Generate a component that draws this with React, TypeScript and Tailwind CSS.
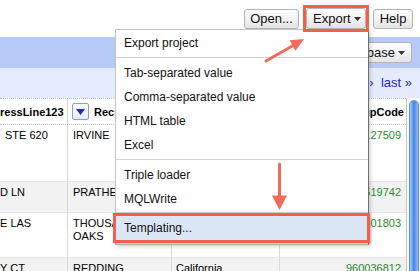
import React from "react";

function Caret({ color = "#333" }: { color?: string }) {
  return (
    <svg width="7" height="4" viewBox="0 0 7 4" className="ml-[3px] shrink-0">
      <path d="M0 0 L7 0 L3.5 4 Z" fill={color} />
    </svg>
  );
}

function Btn({ children, className = "" }: { children: React.ReactNode; className?: string }) {
  return (
    <div
      className={
        "h-[20px] flex items-center text-[13px] leading-none rounded-[3px] border border-[#b4b4b4] bg-linear-to-b from-white to-[#e4e4e4] text-[#111] whitespace-nowrap " +
        className
      }
    >
      {children}
    </div>
  );
}

function DropBox() {
  return (
    <div className="w-[17px] h-[17px] shrink-0 rounded-[2px] border border-[#8e9ccc] bg-linear-to-b from-white to-[#e6eaf6] flex items-center justify-center">
      <svg width="9" height="6" viewBox="0 0 9 6">
        <path d="M0 0 L9 0 L4.5 6 Z" fill="#2224c6" />
      </svg>
    </div>
  );
}

const rows = [
  { h: "h-[57px]", bg: "bg-white", c1: "STE 620", c1pad: "pl-[5px]", c2: "IRVINE", c3: "California", zip: "926127509" },
  { h: "h-[31px]", bg: "bg-[#f2f2f2]", c1: "D LN", c1pad: "pl-0", c2: "PRATHER", c3: "California", zip: "936519742" },
  { h: "h-[45px]", bg: "bg-white", c1: "E LAS", c1pad: "pl-0", c2: "THOUSAND OAKS", c3: "California", zip: "913601803" },
  { h: "h-[31px]", bg: "bg-[#f2f2f2]", c1: "Y CT", c1pad: "pl-0", c2: "REDDING", c3: "California", zip: "960036812" },
];

function MenuItem({ children }: { children: React.ReactNode }) {
  return <div className="h-[24px] flex items-center pl-[8px] text-[12px] text-[#111] whitespace-nowrap">{children}</div>;
}

function Sep({ className = "mt-[2px] mb-[3px]" }: { className?: string }) {
  return <div className={"h-px bg-[#d2d2d2] " + className} />;
}

export default function App() {
  return (
    <div className="relative w-[420px] h-[271px] overflow-hidden bg-white font-['Liberation_Sans',Arial,sans-serif] text-black">
      {/* top bar */}
      <div className="h-[37px] flex items-center justify-end pr-[7px] gap-[4px]">
        <Btn className="w-[55px] justify-center">Open...</Btn>
        <div className="relative z-30 border-[3px] border-[#f1604f] bg-white">
          <Btn className="h-[21px] w-[60px] pl-[6px] pr-[3px]">
            Export
            <Caret />
          </Btn>
        </div>
        <Btn className="w-[40px] justify-center">Help</Btn>
      </div>

      {/* blue band */}
      <div className="h-[31px] bg-[#b8cbf8] flex items-center justify-end pr-[8px]">
        <Btn className="h-[21px] pl-[6px] pr-[6px]">
          Freebase
          <Caret />
        </Btn>
      </div>

      {/* light band */}
      <div className="h-[30px] bg-[#e4ebfd] flex items-center justify-end pr-[8px] text-[13px] text-[#2626c8] whitespace-nowrap">
        next ›&nbsp;&nbsp;last »
      </div>

      {/* table */}
      <div className="flex">
        <div className="w-[407px] border-r border-[#c4c4c4] text-[11px] leading-[13px]">
          <div className="h-[27px] flex border-t border-[#b3c3ec] border-b border-b-[#c8c8c8] border-dotted font-bold">
            <div className="w-[68px] shrink-0 border-r border-[#d6d6d6] flex items-center pt-[2px] overflow-hidden whitespace-nowrap">
              ressLine123
            </div>
            <div className="w-[104px] shrink-0 border-r border-[#d6d6d6] flex items-center pl-[4px] overflow-hidden whitespace-nowrap">
              <DropBox />
              <span className="ml-[5px] pt-[2px]">RecipientCity</span>
            </div>
            <div className="w-[108px] shrink-0 border-r border-[#d6d6d6] flex items-center pl-[4px] overflow-hidden whitespace-nowrap">
              <DropBox />
              <span className="ml-[5px] pt-[2px]">State</span>
            </div>
            <div className="flex-1 flex items-center justify-end pr-[2px] overflow-hidden whitespace-nowrap">
              <DropBox />
              <span className="ml-[5px] pt-[2px]">PostalZipCode</span>
            </div>
          </div>
          {rows.map((r, i) => (
            <div key={i} className={"flex border-b border-[#e4e4e4] " + r.h + " " + r.bg}>
              <div className={"w-[68px] shrink-0 border-r border-[#d9d9d9] pt-[4px] overflow-hidden whitespace-nowrap " + r.c1pad}>
                {r.c1}
              </div>
              <div className="w-[104px] shrink-0 border-r border-[#d9d9d9] pt-[4px] pl-[5px] pr-[4px]">{r.c2}</div>
              <div className="w-[108px] shrink-0 border-r border-[#d9d9d9] pt-[4px] pl-[4px]">{r.c3}</div>
              <div className="flex-1 pt-[4px] pr-[5px] text-right text-[#2b8a2b]">{r.zip}</div>
            </div>
          ))}
        </div>
        <div className="flex-1 pl-[2px] pt-[2px]">
          <div className="w-[10px] h-[200px] rounded-t-[5px] bg-linear-to-r from-[#a9c8f6] via-[#3f84ea] to-[#9bbdf3] border border-[#5b8fd8]" />
        </div>
      </div>

      {/* dropdown menu */}
      <div className="absolute left-[115px] top-[29px] w-[254px] z-20 bg-white border-l border-t border-b border-[#c4c4c4] border-r border-r-[#6e6e6e] pt-[1px] pb-[4px] shadow-[2px_2px_3px_rgba(0,0,0,0.15)]">
        <MenuItem>Export project</MenuItem>
        <Sep />
        <MenuItem>Tab-separated value</MenuItem>
        <MenuItem>Comma-separated value</MenuItem>
        <MenuItem>HTML table</MenuItem>
        <MenuItem>Excel</MenuItem>
        <Sep />
        <MenuItem>Triple loader</MenuItem>
        <MenuItem>MQLWrite</MenuItem>
        <Sep className="mt-[1px] mb-[3px]" />
        <div className="relative h-[24px] flex items-center pl-[8px] text-[12px] text-[#111] bg-[#dce7f6]">
          Templating...
          <div className="absolute -left-[3px] -top-[3px] w-[257px] h-[30px] border-[3px] border-[#f1604f] shadow-[1px_1px_2px_rgba(0,0,0,0.25)]" />
        </div>
      </div>

      {/* arrows */}
      <svg className="absolute left-0 top-0 z-40 pointer-events-none" width="420" height="271" viewBox="0 0 420 271">
        <line x1="266" y1="61" x2="294" y2="45" stroke="#f26a5a" strokeWidth="3" strokeLinecap="round" />
        <path d="M304 39 L295.5 50.7 L289.5 40.3 Z" fill="#f26a5a" />
        <line x1="279.5" y1="164" x2="279.5" y2="198" stroke="#f26a5a" strokeWidth="3" strokeLinecap="round" />
        <path d="M272 195.5 L287 195.5 L279.5 210 Z" fill="#f26a5a" />
      </svg>
    </div>
  );
}
